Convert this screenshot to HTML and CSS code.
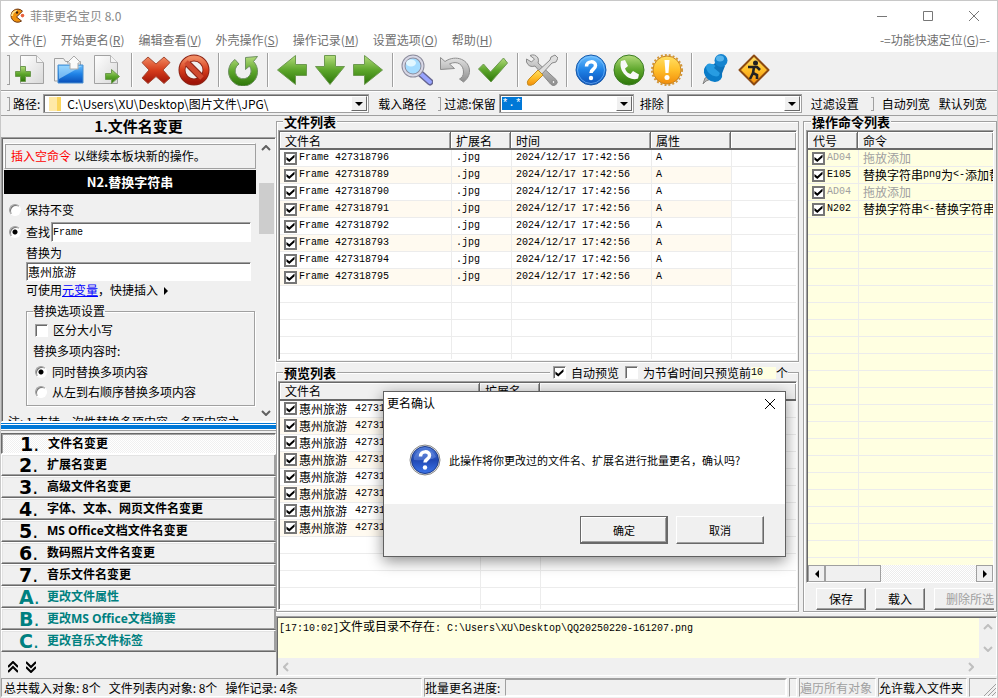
FILE: index.html
```html
<!DOCTYPE html>
<html lang="zh-CN">
<head>
<meta charset="utf-8">
<meta name="viewport" content="width=device-width, initial-scale=1">
<title>菲菲更名宝贝 8.0</title>
<link rel="stylesheet" href="styles.css">
</head>
<body>
<svg class="defs" width="0" height="0" aria-hidden="true">
  <defs>
    <linearGradient id="green" x1="0" y1="0" x2="0" y2="1"><stop offset="0" stop-color="#b4dc7c"/><stop offset=".5" stop-color="#5da62c"/><stop offset="1" stop-color="#2c7508"/></linearGradient>
    <linearGradient id="red" x1="0" y1="0" x2="0" y2="1"><stop offset="0" stop-color="#f08a62"/><stop offset=".5" stop-color="#d63d1c"/><stop offset="1" stop-color="#a01408"/></linearGradient>
    <linearGradient id="blue" x1="0" y1="0" x2="0" y2="1"><stop offset="0" stop-color="#6cc0ff"/><stop offset=".5" stop-color="#1f82e6"/><stop offset="1" stop-color="#0a4fb8"/></linearGradient>
    <linearGradient id="amber" x1="0" y1="0" x2="0" y2="1"><stop offset="0" stop-color="#ffe066"/><stop offset=".5" stop-color="#ffbf2a"/><stop offset="1" stop-color="#f28c0a"/></linearGradient>
    <linearGradient id="paper" x1="0" y1="0" x2="1" y2="1"><stop offset="0" stop-color="#fff"/><stop offset="1" stop-color="#d8d8d8"/></linearGradient>
    <linearGradient id="steel" x1="0" y1="0" x2="0" y2="1"><stop offset="0" stop-color="#e2e2e2"/><stop offset="1" stop-color="#8e8e8e"/></linearGradient>
    <linearGradient id="navy" x1="0" y1="0" x2="0" y2="1"><stop offset="0" stop-color="#5580dc"/><stop offset=".5" stop-color="#2048b4"/><stop offset="1" stop-color="#3c74e8"/></linearGradient>
  </defs>
</svg>
<div class="app">
  <header class="titlebar">
    <svg class="logo" viewBox="0 0 16 16"><path d="M13.500 3.200A6.600 6.600 0 1 0 12.500 13L7.500 9Z" fill="#f0920e" stroke="#6b3410"/><path d="M3 8a5 5 0 0 1 5-5" fill="none" stroke="#ffe08a" stroke-width="2"/><circle cx="8" cy="4.500" r="1.200" fill="#3a1c08"/><circle cx="13.500" cy="7.600" r="1.800" fill="#e8603c"/></svg>
    <h1>菲菲更名宝贝 8.0</h1>
    <div class="window-buttons">
      <button aria-label="最小化"><svg viewBox="0 0 10 10"><path d="M0 5.500h10"/></svg></button>
      <button aria-label="最大化"><svg viewBox="0 0 10 10"><path d="M.5.5h9v9h-9z"/></svg></button>
      <button aria-label="关闭"><svg viewBox="0 0 10 10"><path d="M0 0l10 10M10 0L0 10"/></svg></button>
    </div>
  </header>
  <nav class="menubar">
    <a href="#">文件(<u>F</u>)</a><a href="#">开始更名(<u>R</u>)</a><a href="#">编辑查看(<u>V</u>)</a><a href="#">外壳操作(<u>S</u>)</a><a href="#">操作记录(<u>M</u>)</a><a href="#">设置选项(<u>O</u>)</a><a href="#">帮助(<u>H</u>)</a><a href="#" class="locate">-=功能快速定位(<u>G</u>)=-</a>
  </nav>
  <div class="toolbar">
    <i class="grip"></i>
    <button aria-label="添加文件"><svg viewBox="0 0 32 32"><path d="M5.500 1.500h16l7 7v21h-23z" fill="url(#paper)" stroke="#a2a2a2"/><path d="M21.500 1.500v7h7" fill="#f4f4f4" stroke="#b4b4b4"/><path d="M5.500 12.500h5v5h5v5h-5v5h-5v-5h-5v-5h5z" fill="url(#green)" stroke="#6d9a50"/></svg></button>
    <button aria-label="添加文件夹"><svg viewBox="0 0 32 32"><path d="M1.500 27V4.500h9l2 3h15V27z" fill="#f2f2f2" stroke="#a0a0a0"/><path d="M5 11h25v18H5z" fill="url(#blue)" stroke="#4a90d0"/><path d="M6 12h23L6 25z" fill="#b8e6ff" opacity=".6"/><path d="M21 2l7 7h-3v6h-8V9h-3z" fill="#fafafa" stroke="#aaa"/></svg></button>
    <button aria-label="导入列表"><svg viewBox="0 0 32 32"><path d="M3.500 1.500h16l7 7v21h-23z" fill="url(#paper)" stroke="#a2a2a2"/><path d="M19.500 1.500v7h7" fill="#f4f4f4" stroke="#b4b4b4"/><path d="M14.500 19.500h6v-4l8 7-8 7v-4h-6z" fill="url(#green)" stroke="#6d9a50"/></svg></button>
    <i class="sep"></i>
    <button aria-label="删除"><svg viewBox="0 0 32 32"><path d="M8 3l8 7 8-7 6 5.500-7 7.500 7 8-6 5.500-8-7-8 7-6-5.500L9 16 2 8.500z" fill="url(#red)" stroke="#a44a34"/></svg></button>
    <button aria-label="清空"><svg viewBox="0 0 32 32"><circle cx="16" cy="16" r="12" fill="none" stroke="#8c2416" stroke-width="7"/><path d="M8 8l16 16" stroke="#8c2416" stroke-width="7"/><circle cx="16" cy="16" r="12" fill="none" stroke="url(#red)" stroke-width="5"/><path d="M8 8l16 16" stroke="#d04a30" stroke-width="5"/></svg></button>
    <i class="sep"></i>
    <button aria-label="刷新"><svg viewBox="0 0 32 32"><path d="M8 5.500L12 10A8 8 0 1 0 22.500 12L18.500 15.500V3.500L30.500 2.500 26.500 7.500A14.500 14.500 0 1 1 8 5.500z" fill="url(#green)" stroke="#6d9060"/></svg></button>
    <i class="sep"></i>
    <button aria-label="向左"><svg viewBox="0 0 32 32"><path d="M1.500 16L19.500 1.500v9h11v11h-11v9z" fill="url(#green)" stroke="#6d9a50"/></svg></button>
    <button aria-label="向下"><svg viewBox="0 0 32 32"><path d="M10.500 1.500h11v11h9L16 30.500 1.500 12.500h9z" fill="url(#green)" stroke="#6d9a50"/></svg></button>
    <button aria-label="向右"><svg viewBox="0 0 32 32"><path d="M30.500 16L12.500 1.500v9h-11v11h11v9z" fill="url(#green)" stroke="#6d9a50"/></svg></button>
    <i class="sep"></i>
    <button aria-label="预览"><svg viewBox="0 0 32 32"><path d="M20 20l9 8" stroke="#666690" stroke-width="7" stroke-linecap="round"/><path d="M20 20l9 8" stroke="#98a4ff" stroke-width="4" stroke-linecap="round"/><circle cx="12" cy="12" r="9.500" fill="#a4dcff" stroke="#8c8c9c" stroke-width="4"/><circle cx="12" cy="12" r="9.500" fill="none" stroke="#d8d8e6" stroke-width="2"/><ellipse cx="10" cy="9" rx="5" ry="3.500" fill="#e2f7ff"/></svg></button>
    <button aria-label="撤销"><svg viewBox="0 0 32 32"><path d="M1.500 3.500v12l14-1-5-4.500c8-4 14 1 14 8 0 4-2 6-4 7l4 3c4-3 6-7 6-11C30.500 6 17 0 6 7.500z" fill="url(#steel)" stroke="#8d8d8d"/></svg></button>
    <button aria-label="执行更名"><svg viewBox="0 0 32 32"><path d="M1.500 15l5-5 7 8L26.500 4l4 5L14 28z" fill="url(#green)" stroke="#6d9a50"/></svg></button>
    <i class="sep"></i>
    <button aria-label="设置"><svg viewBox="0 0 32 32"><path d="M4 1.500Q9-.5 12 4q1 3 0 5l18.500 17q2 3-1 5-3 1.500-5-1L9 12q-6 2-8.500-4V5l5 3 3-3z" fill="url(#steel)" stroke="#8a8a8a"/><circle cx="27.500" cy="28" r="1.500" fill="#eee" stroke="#888"/><path d="M29 1l3 3-2 4-4 1-11 12-4-3L24 6l1-3z" fill="#dedede" stroke="#8a8a8a"/><path d="M12 16l5 5-9 9q-3 2-6 1-2-3 1-6z" fill="url(#amber)" stroke="#c78d20"/></svg></button>
    <i class="sep"></i>
    <button aria-label="帮助"><svg viewBox="0 0 32 32"><circle cx="16" cy="16" r="15" fill="url(#blue)" stroke="#1758a8"/><circle cx="16" cy="16" r="13.500" fill="none" stroke="#8cc8ff" opacity=".6"/><path d="M11.500 12.500c0-6 9-6 9-1 0 4-4.500 3.500-4.500 7.500" fill="none" stroke="#fff" stroke-width="3.500"/><circle cx="16" cy="24" r="2.200" fill="#fff"/></svg></button>
    <button aria-label="联系"><svg viewBox="0 0 32 32"><circle cx="16" cy="16" r="15" fill="url(#green)" stroke="#3c7c24"/><path d="M8 7l4-1 3 6-3 2.500c1 3 3 5 5.500 5.500L20 17l6 3.500-1 4C17 28 5 18 8 7z" fill="#f8f8f8"/></svg></button>
    <button aria-label="注册"><svg viewBox="0 0 32 32"><circle cx="16" cy="16" r="14" fill="url(#amber)" stroke="#c78320"/><circle cx="16" cy="16" r="15" fill="none" stroke="#d29638" stroke-width="2" stroke-dasharray="2 2"/><path d="M13.500 6h5l-1 13h-3z" fill="#fff"/><circle cx="16" cy="23.500" r="2.500" fill="#fff"/></svg></button>
    <i class="sep"></i>
    <button aria-label="置顶"><svg viewBox="0 0 32 32"><path d="M3 30l2-6 5-2 1 3-5 2z" fill="#b4b4b4" stroke="#888"/><ellipse cx="13" cy="19" rx="10" ry="8" transform="rotate(40 13 19)" fill="#0a7cc8"/><path d="M10 14l8-8 7 6-4 10z" fill="#0c70b8"/><ellipse cx="13" cy="16" rx="8" ry="5" transform="rotate(40 13 16)" fill="#279ce2"/><path d="M14 14l5-7 5 4-4 8z" fill="#0d74bc"/><circle cx="21" cy="6.500" r="6.500" fill="#1584cf"/><ellipse cx="20" cy="4.500" rx="4" ry="3" fill="#56b4ec"/></svg></button>
    <button aria-label="退出"><svg viewBox="0 0 32 32"><path d="M16 1.500L30.500 16 16 30.500 1.500 16z" fill="url(#amber)" stroke="#8c4a12" stroke-width="2" stroke-linejoin="round"/><circle cx="17.500" cy="9" r="2.500" fill="#222"/><path d="M10 13l9 0 3 3M16 13l-1 6 4 2v4M15 19l-3 6" fill="none" stroke="#222" stroke-width="2.600"/></svg></button>
  </div>
  <div class="pathbar">
    <i class="grip"></i>
    <label for="path">路径:</label>
    <div class="combo path-combo"><i class="folder"></i><input id="path" value="C:\Users\XU\Desktop\图片文件\JPG\"><button aria-label="展开路径"></button></div>
    <button class="flat">载入路径</button>
    <i class="grip"></i>
    <label for="keep">过滤:保留</label>
    <div class="combo"><input id="keep" class="selected" value="*.*"><button aria-label="展开保留"></button></div>
    <label class="next" for="exclude">排除</label>
    <div class="combo"><input id="exclude"><button aria-label="展开排除"></button></div>
    <button class="flat">过滤设置</button>
    <i class="grip"></i>
    <div class="widths"><button>自动列宽</button><button>默认列宽</button></div>
  </div>

  <main>
    <aside>
      <h2>1.文件名变更</h2>
      <div class="pane">
        <form class="options">
          <p class="notice"><a href="#">插入空命令</a> 以继续本板块新的操作。</p>
          <h3>N2.替换字符串</h3>
          <div class="line"><input type="radio" name="mode" id="m1"><label for="m1">保持不变</label></div>
          <div class="line"><input type="radio" name="mode" id="m2" checked><label for="m2">查找</label><input class="field mono" aria-label="查找" value="Frame"></div>
          <label class="indent" for="rep">替换为</label>
          <input class="field replace" id="rep" value="惠州旅游">
          <p class="indent hint">可使用<a href="#">元变量</a>，快捷插入 <i class="tri"></i></p>
          <fieldset>
            <legend>替换选项设置</legend>
            <div class="line"><input type="checkbox" id="case" class="soft"><label for="case">区分大小写</label></div>
            <p>替换多项内容时:</p>
            <div class="line"><input type="radio" name="multi" id="r1" checked><label for="r1">同时替换多项内容</label></div>
            <div class="line"><input type="radio" name="multi" id="r2"><label for="r2">从左到右顺序替换多项内容</label></div>
          </fieldset>
          <p class="remark">注: 1.支持一次性替换多项内容。多项内容之</p>
        </form>
        <div class="vscroll"><svg viewBox="0 0 10 6"><path d="M1 5l4-4 4 4"/></svg><i></i><svg viewBox="0 0 10 6"><path d="M1 1l4 4 4-4"/></svg></div>
      </div>
      <div class="splitter"></div>
      <nav class="sections">
        <button class="active"><b>1<i>.</i></b>文件名变更</button>
        <button><b>2<i>.</i></b>扩展名变更</button>
        <button><b>3<i>.</i></b>高级文件名变更</button>
        <button><b>4<i>.</i></b>字体、文本、网页文件名变更</button>
        <button><b>5<i>.</i></b>MS Office文档文件名变更</button>
        <button><b>6<i>.</i></b>数码照片文件名变更</button>
        <button><b>7<i>.</i></b>音乐文件名变更</button>
        <button class="teal"><b>A<i>.</i></b>更改文件属性</button>
        <button class="teal"><b>B<i>.</i></b>更改MS Office文档摘要</button>
        <button class="teal"><b>C<i>.</i></b>更改音乐文件标签</button>
      </nav>
      <div class="chevrons">
        <button aria-label="上移"><svg viewBox="0 0 10 12"><path d="M0 6l5-5 5 5M0 11l5-5 5 5"/></svg></button>
        <button aria-label="下移"><svg viewBox="0 0 10 12"><path d="M0 1l5 5 5-5M0 6l5 5 5-5"/></svg></button>
      </div>
    </aside>

    <div class="work">
      <div class="lists">
        <section class="group">
          <div class="caption"><h2>文件列表</h2></div>
          <div class="list files">
            <table>
              <colgroup><col class="c-name"><col class="c-ext"><col class="c-time"><col class="c-attr"><col></colgroup>
              <thead><tr><th>文件名</th><th>扩展名</th><th>时间</th><th>属性</th><th></th></tr></thead>
              <tbody>
                <tr><td><label><input type="checkbox" checked>Frame 427318796</label></td><td>.jpg</td><td>2024/12/17 17:42:56</td><td>A</td><td></td></tr>
                <tr><td><label><input type="checkbox" checked>Frame 427318789</label></td><td>.jpg</td><td>2024/12/17 17:42:56</td><td>A</td><td></td></tr>
                <tr><td><label><input type="checkbox" checked>Frame 427318790</label></td><td>.jpg</td><td>2024/12/17 17:42:56</td><td>A</td><td></td></tr>
                <tr><td><label><input type="checkbox" checked>Frame 427318791</label></td><td>.jpg</td><td>2024/12/17 17:42:56</td><td>A</td><td></td></tr>
                <tr><td><label><input type="checkbox" checked>Frame 427318792</label></td><td>.jpg</td><td>2024/12/17 17:42:56</td><td>A</td><td></td></tr>
                <tr><td><label><input type="checkbox" checked>Frame 427318793</label></td><td>.jpg</td><td>2024/12/17 17:42:56</td><td>A</td><td></td></tr>
                <tr><td><label><input type="checkbox" checked>Frame 427318794</label></td><td>.jpg</td><td>2024/12/17 17:42:56</td><td>A</td><td></td></tr>
                <tr><td><label><input type="checkbox" checked>Frame 427318795</label></td><td>.jpg</td><td>2024/12/17 17:42:56</td><td>A</td><td></td></tr>
              </tbody>
            </table>
          </div>
        </section>
        <section class="group">
          <div class="caption"><h2>预览列表</h2>
            <div class="preview-options"><input type="checkbox" id="auto" class="soft" checked><label for="auto">自动预览</label><input type="checkbox" id="limit" class="soft"><label for="limit">为节省时间只预览前</label><input class="count mono" aria-label="预览个数" value="10"><span>个</span></div>
          </div>
          <div class="list preview">
            <table>
              <colgroup><col class="p-name"><col class="p-ext"><col></colgroup>
              <thead><tr><th>文件名</th><th>扩展名</th><th></th></tr></thead>
              <tbody>
                <tr><td><label><input type="checkbox" checked><span>惠州旅游</span> 427318796</label></td><td>.jpg</td><td></td></tr>
                <tr><td><label><input type="checkbox" checked><span>惠州旅游</span> 427318789</label></td><td>.jpg</td><td></td></tr>
                <tr><td><label><input type="checkbox" checked><span>惠州旅游</span> 427318790</label></td><td>.jpg</td><td></td></tr>
                <tr><td><label><input type="checkbox" checked><span>惠州旅游</span> 427318791</label></td><td>.jpg</td><td></td></tr>
                <tr><td><label><input type="checkbox" checked><span>惠州旅游</span> 427318792</label></td><td>.jpg</td><td></td></tr>
                <tr><td><label><input type="checkbox" checked><span>惠州旅游</span> 427318793</label></td><td>.jpg</td><td></td></tr>
                <tr><td><label><input type="checkbox" checked><span>惠州旅游</span> 427318794</label></td><td>.jpg</td><td></td></tr>
                <tr><td><label><input type="checkbox" checked><span>惠州旅游</span> 427318795</label></td><td>.jpg</td><td></td></tr>
              </tbody>
            </table>
          </div>
        </section>
      </div>
      <section class="group commands">
        <div class="caption"><h2>操作命令列表</h2></div>
        <div class="list orders">
          <table>
            <colgroup><col class="o-code"><col></colgroup>
            <thead><tr><th>代号</th><th>命令</th></tr></thead>
            <tbody>
              <tr class="dim"><td><label><input type="checkbox" checked>AD04</label></td><td><span>拖放添加</span></td></tr>
              <tr><td><label><input type="checkbox" checked>E105</label></td><td><span>替换字符串</span>png<span>为</span>&lt;-<span>添加替</span></td></tr>
              <tr class="dim"><td><label><input type="checkbox" checked>AD04</label></td><td><span>拖放添加</span></td></tr>
              <tr><td><label><input type="checkbox" checked>N202</label></td><td><span>替换字符串</span>&lt;-<span>替换字符串</span></td></tr>
            </tbody>
          </table>
          <div class="hscroll"><button class="left" aria-label="向左滚动"></button><i></i><button class="right" aria-label="向右滚动"></button></div>
        </div>
        <div class="actions"><button>保存</button><button>载入</button><button disabled>删除所选</button></div>
      </section>
      <section class="log">
        <p><span class="mono">[17:10:02]</span>文件或目录不存在<span class="mono">: C:\Users\XU\Desktop\QQ20250220-161207.png</span></p>
        <div class="log-v"><svg viewBox="0 0 10 6"><path d="M1 5l4-4 4 4"/></svg><svg viewBox="0 0 10 6"><path d="M1 1l4 4 4-4"/></svg></div>
        <div class="log-h"><svg viewBox="0 0 6 10"><path d="M5 1L1 5l4 4"/></svg><svg viewBox="0 0 6 10"><path d="M1 1l4 4-4 4"/></svg></div>
      </section>
    </div>
  </main>

  <footer>
    <div class="totals"><span>总共载入对象: 8个</span><span>文件列表内对象: 8个</span><span>操作记录: 4条</span></div>
    <div class="progress"><span>批量更名进度:</span><i></i></div>
    <div class="blank"></div>
    <div class="off">遍历所有对象</div>
    <div class="on">允许载入文件夹</div>
    <div class="corner"><svg viewBox="0 0 12 12"><path d="M0 12L12 0M4 12l8-8M8 12l4-4"/></svg></div>
  </footer>

  <div class="dialog" role="dialog" aria-labelledby="dlg-title">
    <div class="dialog-title"><h2 id="dlg-title">更名确认</h2><button aria-label="关闭"><svg viewBox="0 0 10 10"><path d="M0 0l10 10M10 0L0 10"/></svg></button></div>
    <div class="dialog-body">
      <svg viewBox="0 0 32 32"><circle cx="16" cy="16" r="15" fill="#e4e4e4" stroke="#888"/><circle cx="16" cy="16" r="13.500" fill="url(#navy)" stroke="#1c3c8c"/><path d="M5 13a12 12 0 0 1 22 0q-6 4-22 3z" fill="#8cacf0" opacity=".35"/><path d="M11.500 12.500c0-6 9-6 9-1 0 4-4.500 3.500-4.500 7" fill="none" stroke="#fff" stroke-width="3.500"/><circle cx="16" cy="23.500" r="2.200" fill="#fff"/></svg>
      <p>此操作将你更改过的文件名、扩展名进行批量更名，确认吗?</p>
    </div>
    <div class="dialog-actions"><button class="default">确定</button><button>取消</button></div>
  </div>
</div>
</body>
</html>
```
FILE: styles.css
```css
* { box-sizing: border-box; margin: 0; padding: 0; }

:root {
  --face: #f0f0f0;
  --mid: #a0a0a0;
  --dark: #696969;
  --cream: #ffffe1;
  --line: #ececec;
}

body {
  font: 12px/16px "Noto Sans CJK SC", sans-serif;
  color: #000;
  background: var(--face);
  overflow: hidden;
}

button, input { font: inherit; color: inherit; border: 0; background: none; outline: 0; border-radius: 0; }
h1, h2, h3 { font-size: 12px; font-weight: normal; }
i { font-style: normal; }
svg { display: block; }
.defs { position: absolute; }
.mono { font-family: "Liberation Mono", monospace; font-size: 10px; }

.app {
  position: relative;
  display: flex;
  flex-direction: column;
  height: 100vh;
  border: 1px solid #c8c8c8;
  border-bottom: 0;
}

/* title and menus */
.titlebar { display: flex; align-items: center; height: 29px; padding-left: 8px; background: #fff; color: #888; }
.logo { width: 16px; height: 16px; margin-right: 5px; }
.window-buttons { display: flex; margin-left: auto; }
.window-buttons button { width: 46px; height: 28px; display: grid; place-items: center; }
.window-buttons svg { width: 10px; height: 10px; fill: none; stroke: #777; }
.menubar { display: flex; gap: 14px; height: 20px; padding: 0 7px; background: #fff; line-height: 20px; }
.menubar a { color: #707070; text-decoration: none; white-space: nowrap; }
.locate { margin-left: auto; }

/* toolbars */
.toolbar { display: flex; align-items: center; height: 41px; padding-left: 6px; border-bottom: 1px solid var(--mid); box-shadow: inset 0 2px #fff; }
.toolbar > button { width: 38px; height: 34px; display: grid; place-items: center; }
.toolbar svg { width: 32px; height: 32px; }
.grip { flex: none; width: 3px; height: 14px; border: solid var(--mid); border-width: 1px 1px 1px 0; }
.toolbar .grip { height: 30px; margin-right: 2px; }
.sep { width: 11px; height: 34px; background: linear-gradient(to right, transparent 5px, var(--mid) 5px 6px, #fff 6px 7px, transparent 7px); }
.pathbar { display: flex; align-items: center; height: 25px; padding: 1px 0 0 6px; border-bottom: 1px solid var(--mid); box-shadow: inset 0 1px #fff; white-space: nowrap; }
.pathbar .grip { margin-right: 3px; }
.pathbar label { margin-right: 3px; }
.pathbar .next { margin-left: 6px; }
.flat { margin: 0 12px 0 9px; }
.widths { display: flex; gap: 9px; margin-left: 5px; }
.combo { flex: none; display: flex; align-items: center; width: 135px; height: 19px; padding: 1px; background: #fff; border: 1px solid var(--mid); box-shadow: inset 1px 1px var(--dark); }
.path-combo { width: 326px; flex: 0 1 326px; }
.combo input { flex: 1; min-width: 0; height: 16px; }
.combo input.selected { flex: none; width: 20px; height: 13px; margin: 0 auto 0 1px; background: #0078d7; color: #fff; font-family: "Liberation Mono", monospace; line-height: 13px; font-size: 11px; }
.combo button { width: 16px; height: 15px; background: var(--face); border: 1px solid; border-color: #fff var(--dark) var(--dark) #fff; display: grid; place-items: center; }
.combo button::before { content: ""; border: solid transparent; border-width: 4px 4px 0; border-top-color: #000; }
.folder { width: 12px; height: 14px; margin: 0 6px 0 4px; background: linear-gradient(to right, #ffe9a6 8px, #fbd65c 8px); }

/* workspace */
main { flex: 1; min-height: 0; display: flex; }
aside { flex: none; width: 275px; display: flex; flex-direction: column; }
aside > h2 { padding-bottom: 2px; font-size: 15px; font-weight: bold; line-height: 19px; text-align: center; }
.pane { flex: 1; min-height: 0; display: flex; border: 1px solid; border-color: var(--mid) #fff #fff var(--mid); box-shadow: inset 1px 1px var(--dark); padding: 5px 1px 0 2px; overflow: hidden; }
.options { flex: 1; min-width: 0; height: 100%; overflow: hidden; }
.notice { height: 26px; padding: 0 6px; line-height: 24px; border: 1px solid; border-color: #fff var(--mid) var(--mid) #fff; box-shadow: inset 1px 1px var(--mid); white-space: nowrap; margin-right: 2px; }
.notice a { color: #f00; text-decoration: none; }
.options h3 { margin: 1px 2px 6px 0; background: #000; color: #fff; font-size: 13px; font-weight: bold; line-height: 24px; text-align: center; }
.line { display: flex; align-items: center; height: 20px; }
.options > .line { padding: 0 7px 0 5px; margin-bottom: 2px; }
.options > .line label { white-space: nowrap; }
input[type=radio] { appearance: none; flex: none; width: 12px; height: 12px; margin-right: 5px; border-radius: 50%; background: #fff; border: 1px solid; border-color: var(--mid) #fff #fff var(--mid); box-shadow: inset 1px 1px #777; }
input[type=radio]:checked { background: radial-gradient(circle, #000 2px, #fff 3px); }
.field { width: 100%; height: 20px; margin-left: 1px; padding: 0 1px; background: #fff; border: 1px solid; border-color: var(--mid) #fff #fff var(--mid); box-shadow: inset 1px 1px var(--dark); }
.indent { display: block; padding-left: 22px; height: 18px; line-height: 18px; }
.replace { display: block; width: auto; min-width: 225px; margin-left: 22px; height: 19px; }
.hint a { color: #00f; }
.tri { display: inline-block; margin-left: 3px; border: solid transparent; border-width: 4px 0 4px 4px; border-left-color: #000; }
fieldset { margin: 3px 3px 0 22px; padding: 0 6px 3px; border: 1px solid var(--mid); box-shadow: 1px 1px #fff, inset 1px 1px #fff; }
fieldset legend { line-height: 18px; }
.soft + label { margin-left: 5px; }
fieldset .line label { white-space: nowrap; }
fieldset p { line-height: 22px; }
fieldset .line { padding-left: 2px; }
.remark { padding: 8px 4px 0; white-space: nowrap; }
.vscroll { flex: none; width: 16px; display: flex; flex-direction: column; align-items: center; padding: 2px 0 5px; }
.vscroll svg { width: 10px; height: 6px; }
.vscroll svg, .log svg { fill: none; stroke: #606060; stroke-width: 2; }
.vscroll i { width: 15px; height: 51px; margin: 32px 0 auto; background: #cdcdcd; }
.splitter { height: 11px; background: linear-gradient(#fff 1px, #0078d7 1px 2px, #fff 2px 3px, #0078d7 3px 7px, #fff 7px 8px, var(--mid) 8px 9px, var(--face) 9px); }
.sections button { display: flex; align-items: center; width: 100%; height: 22px; padding-left: 17px; background: var(--face); font-family: "Open Sans", "Noto Sans CJK SC", sans-serif; font-weight: bold; border: 1px solid; border-color: #fff var(--mid) var(--dark) #fff; box-shadow: inset -1px -1px var(--mid), inset 1px 1px #e3e3e3; }
.sections b { display: flex; flex: none; width: 28px; font-family: "DejaVu Sans", sans-serif; font-size: 19px; line-height: 20px; }
.sections b i { font-weight: normal; }
.sections .active { height: 21px; padding-left: 18px; background: repeating-conic-gradient(#fff 0 25%, #f0f0f0 0 50%) 0 0 / 2px 2px; border-color: var(--dark) #fff #fff var(--dark); box-shadow: inset 1px 1px var(--mid); }
.sections .teal { color: #008080; }
.chevrons { display: flex; gap: 8px; height: 24px; padding: 5px 7px 0; }
.chevrons svg { width: 10px; height: 12px; fill: none; stroke: #000; stroke-width: 2; }

.work { flex: 1; min-width: 0; display: grid; grid-template-columns: 1fr 194px; grid-template-rows: minmax(0, 1fr) 60px; column-gap: 4px; row-gap: 4px; }
.lists { display: grid; grid-template-rows: 1fr 1fr; gap: 5px; min-height: 0; min-width: 0; }
.group { position: relative; display: flex; flex-direction: column; min-width: 0; min-height: 0; padding: 0 2px 2px; }
.group::before { content: ""; position: absolute; inset: 5px 0 0; border: 1px solid var(--mid); box-shadow: inset 1px 1px #fff, 0 1px #fff; }
.caption, .list, .actions { position: relative; }
.caption { display: flex; height: 14px; padding: 0 5px; line-height: 12px; }
.caption h2 { height: 13px; padding: 0 1px; background: var(--face); font-size: 13px; font-weight: bold; }
.preview-options { display: flex; align-items: center; height: 12px; margin: 0 4px 0 auto; padding-left: 3px; background: var(--face); white-space: nowrap; }
.preview-options label { margin-right: 6px; }
.preview-options .count { width: 25px; height: 12px; margin-left: -6px; background: var(--cream); }

.list { flex: 1; min-height: 0; overflow: hidden; background-color: #fff; border: 1px solid; border-color: var(--mid) #fff #fff var(--mid); box-shadow: inset 1px 1px var(--dark); padding: 1px 0 0 1px; }
.list::before { content: ""; position: absolute; inset: 19px 0 0 1px; background: repeating-linear-gradient(transparent 0 16px, var(--line) 16px 17px); }
.list::after { content: ""; position: absolute; inset: 19px 0 0 1px; pointer-events: none; }
.files::after { background: linear-gradient(var(--line), var(--line)) 171px 0 / 1px 100% no-repeat, linear-gradient(var(--line), var(--line)) 231px 0 / 1px 100% no-repeat, linear-gradient(var(--line), var(--line)) 371px 0 / 1px 100% no-repeat, linear-gradient(var(--line), var(--line)) 451px 0 / 1px 100% no-repeat; }
.preview::after { background: linear-gradient(var(--line), var(--line)) 200px 0 / 1px 100% no-repeat, linear-gradient(var(--line), var(--line)) 260px 0 / 1px 100% no-repeat; }
.orders::after { background: linear-gradient(var(--line), var(--line)) 50px 0 / 1px 100% no-repeat; }
table { position: relative; width: 100%; table-layout: fixed; border-collapse: separate; border-spacing: 0; }
.c-name { width: 171px; }
.c-ext { width: 60px; }
.c-time { width: 140px; }
.c-attr { width: 80px; }
.p-name { width: 200px; }
.p-ext { width: 60px; }
.o-code { width: 50px; }
th { height: 18px; padding: 0 5px; line-height: 15px; font-weight: normal; text-align: left; background: var(--face); border-bottom: 2px solid var(--dark); border-right: 1px solid var(--dark); box-shadow: inset 1px 1px #fff, inset -1px 0 var(--mid); }
th:last-child { border-right: 0; }
td { height: 17px; padding: 0 5px; border-bottom: 1px solid var(--line); font: 10px/16px "Liberation Mono", monospace; white-space: nowrap; overflow: hidden; }
td:first-child { padding-left: 4px; }
td span { font: 12px/16px "Noto Sans CJK SC", sans-serif; vertical-align: top; }
td label { display: flex; align-items: center; gap: 2px; height: 16px; white-space: pre; }
tbody tr:nth-child(even) td:not(:last-child) { background: #fffaf0; }
.orders { display: flex; flex-direction: column; background-color: var(--cream); }
.orders tbody tr:nth-child(even) td:not(:last-child) { background: none; }
.orders .dim { color: var(--mid); }
.orders .dim input { color: #000; }
.commands { padding: 0 3px 2px; }

input[type=checkbox] { appearance: none; flex: none; width: 13px; height: 13px; display: grid; place-items: center; background: #fff; border: 2px solid #767676; }
input[type=checkbox]:checked::before { content: ""; width: 9px; height: 8px; background: #000; clip-path: polygon(5% 38%, 37% 66%, 95% 5%, 95% 42%, 37% 100%, 5% 72%); }
input[type=checkbox].soft { border: 1px solid; border-color: var(--mid) #fff #fff var(--mid); box-shadow: inset 1px 1px var(--dark); }

.hscroll { position: relative; z-index: 1; display: flex; height: 17px; margin-top: auto; background: repeating-conic-gradient(#fff 0 25%, #ececec 0 50%) 0 0 / 2px 2px; }
.hscroll i { width: 56px; background: var(--face); border: 1px solid var(--mid); }
.hscroll button { width: 17px; background: var(--face); border: 1px solid var(--mid); display: grid; place-items: center; }
.hscroll .right { margin-left: auto; }
.hscroll button::before { content: ""; border: solid transparent; border-width: 4px 4px 4px 0; border-right-color: #000; }
.hscroll .right::before { border-width: 4px 0 4px 4px; border-left-color: #000; }
.actions { display: flex; gap: 9px; padding: 5px 0 0 10px; height: 27px; overflow: hidden; }
.actions button { flex: none; width: 50px; height: 22px; }
.actions button:disabled { width: 72px; color: var(--mid); }
.actions button, .dialog-actions button { background: var(--face); border: 1px solid; border-color: #fff var(--dark) var(--dark) #fff; box-shadow: inset -1px -1px var(--mid); }

.log { grid-column: 1 / -1; display: grid; grid-template: minmax(0, 1fr) 17px / 1fr 17px; border: 1px solid; border-color: var(--mid) #fff #fff var(--mid); box-shadow: inset 1px 1px var(--dark); padding: 1px 0 0 1px; }
.log p { padding: 0 1px; background: var(--cream); white-space: nowrap; overflow: hidden; }
.log svg { stroke: #bfbfbf; }
.log-v { display: flex; flex-direction: column; align-items: center; justify-content: space-between; padding: 6px 0; }
.log-v svg { width: 10px; height: 6px; }
.log-h { display: flex; align-items: center; justify-content: space-between; padding: 0 5px; }
.log-h svg { width: 6px; height: 10px; }

/* status bar */
footer { flex: none; display: flex; gap: 2px; height: 20px; margin-top: 2px; padding-bottom: 1px; white-space: nowrap; }
footer > div { border: 1px solid; border-color: var(--mid) #fff #fff var(--mid); line-height: 17px; }
.totals { flex: 0 1 421px; display: flex; gap: 8px; padding-left: 2px; overflow: hidden; }
.progress { flex: 1; display: flex; gap: 5px; }
.progress i { flex: 1; border: 1px solid; border-color: var(--mid) #fff #fff var(--mid); }
.blank { width: 8px; }
.off { width: 77px; color: var(--mid); }
.on { width: 89px; }
.corner { width: 28px; display: flex; justify-content: flex-end; align-items: flex-end; }
.corner svg { width: 12px; height: 12px; fill: none; stroke: var(--mid); }

/* confirmation window */
.dialog { position: absolute; z-index: 5; left: 382px; top: 390px; width: 403px; background: #fff; border: 1px solid #606060; box-shadow: 0 4px 14px rgba(0, 0, 0, .45); font-size: 11px; }
.dialog-title { display: flex; justify-content: space-between; height: 24px; padding: 0 10px 0 3px; line-height: 22px; }
.dialog-title svg { width: 10px; height: 10px; fill: none; stroke: #000; }
.dialog-body { display: flex; align-items: center; gap: 8px; height: 88px; padding: 0 25px 0 25px; white-space: nowrap; }
.dialog-body svg { flex: none; width: 32px; height: 32px; }
.dialog-actions { display: flex; justify-content: flex-end; gap: 8px; padding: 12px 21px; background: var(--face); }
.dialog-actions button { width: 88px; height: 28px; }
.dialog-actions .default { border-color: var(--dark); box-shadow: inset -1px -1px var(--dark), inset 1px 1px #fff, inset -2px -2px var(--mid); }
```
